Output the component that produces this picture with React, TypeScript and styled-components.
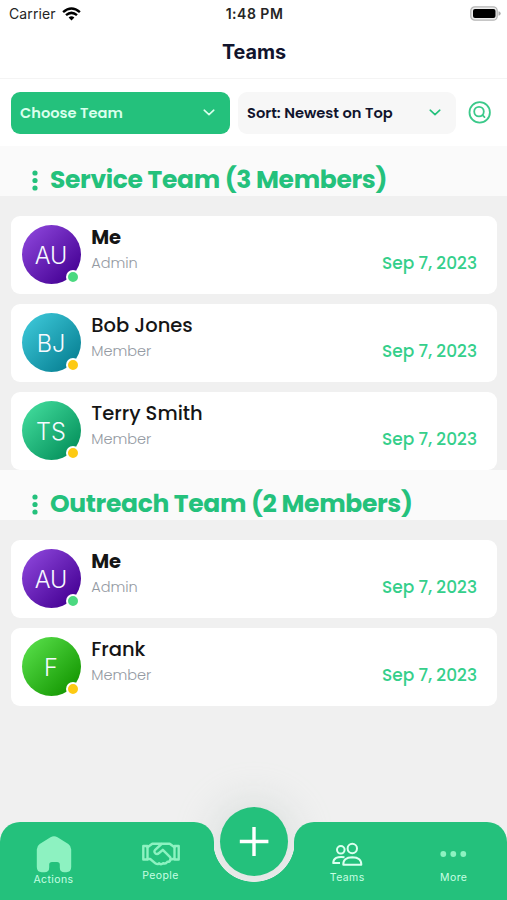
import React from "react";
import styled, { createGlobalStyle } from "styled-components";

const green = "#24c17c";
const mint = "#8df2c1";

const GlobalStyle = createGlobalStyle`
  * { box-sizing: border-box; }
  body { margin: 0; background: #f0f0f0; font-family: Poppins, Inter, sans-serif; }
`;

const Screen = styled.main`
  width: 507px;
  height: 900px;
  display: flex;
  flex-direction: column;
  overflow: hidden;
  background: #f0f0f0;
`;

const StatusBar = styled.div`
  height: 28px;
  flex: none;
  display: grid;
  grid-template-columns: 1fr auto 1fr;
  align-items: center;
  padding: 0 7px 0 9px;
  background: #fff;
  color: #252525;
  font: 400 14px/28px Inter, sans-serif;
`;

const Carrier = styled.div`
  display: flex;
  align-items: center;
  gap: 6px;
  letter-spacing: 0.12px;
`;

const Clock = styled.div`
  font-weight: 600;
  font-size: 14px;
  letter-spacing: 0.5px;
`;

const BatteryIcon = styled.svg`
  justify-self: end;
  margin: -2px -1px 0 0;
`;

const TitleBar = styled.header`
  height: 51px;
  flex: none;
  padding-left: 1px;
  background: #fff;
  border-bottom: 1px solid #f4f4f4;
  text-align: center;
  color: #11142d;
  font: 700 19.8px/49px Inter, sans-serif;
`;

const Filters = styled.div`
  height: 67px;
  flex: none;
  display: flex;
  align-items: flex-start;
  gap: 8px;
  padding: 13px 11px 0;
  background: #fff;
`;

const Select = styled.button<{ $primary?: boolean }>`
  height: 42px;
  width: ${(p) => (p.$primary ? 219 : 218)}px;
  display: flex;
  align-items: center;
  justify-content: space-between;
  border: 0;
  border-radius: 9px;
  padding: 0 14px 0 9px;
  background: ${(p) => (p.$primary ? green : "#f7f7f7")};
  color: ${(p) => (p.$primary ? "#d9ffec" : "#11142d")};
  font: 600 14.65px/42px Poppins, Inter, sans-serif;
  white-space: nowrap;
`;

const SearchButton = styled.button`
  width: 24px;
  height: 24px;
  margin: 8px 0 0 4px;
  padding: 0;
  border: 0;
  background: none;
`;

const TeamHeader = styled.h2`
  height: 50px;
  flex: none;
  display: flex;
  align-items: center;
  gap: 12px;
  margin: 0;
  padding: 18px 0 0 32px;
  background: #fafafa;
  color: ${green};
`;

const TeamName = styled.span`
  font: 700 25px/34px Poppins, Inter, sans-serif;
  letter-spacing: -0.35px;
  white-space: nowrap;
`;

const MemberList = styled.div`
  display: flex;
  flex-direction: column;
  gap: 10px;
  padding: 20px 10px 0 11px;
`;

const Card = styled.article`
  height: 78px;
  display: grid;
  grid-template-columns: 59px 1fr auto;
  column-gap: 10.7px;
  padding: 9px 20px 0 10.5px;
  border-radius: 9px;
  background: #fff;
`;

const Avatar = styled.div<{ $from: string; $to: string }>`
  position: relative;
  width: 59px;
  height: 59px;
  border-radius: 50%;
  background: linear-gradient(135deg, ${(p) => p.$from} 10%, ${(p) => p.$to} 90%);
  color: #f6faff;
  text-align: center;
  font: 300 23.5px/61px Inter, sans-serif;
`;

const Status = styled.span<{ $online: boolean }>`
  position: absolute;
  right: 1px;
  bottom: 0;
  width: 14px;
  height: 14px;
  border: 2px solid #fff;
  border-radius: 50%;
  background: ${(p) => (p.$online ? "#4bd980" : "#fdca13")};
`;

const Person = styled.div`
  display: flex;
  flex-direction: column;
`;

const Name = styled.span<{ $self?: boolean }>`
  padding-top: 1px;
  color: #151515;
  font: ${(p) => (p.$self ? 700 : 500)} 19.5px/24px Poppins, Inter, sans-serif;
`;

const Role = styled.span`
  margin-top: 3px;
  color: #949aa3;
  font: 300 14.5px/20px Poppins, Inter, sans-serif;
`;

const JoinDate = styled.time`
  padding-top: 26px;
  color: #35cf8b;
  font: 500 17px/24px Poppins, Inter, sans-serif;
`;

const Nav = styled.nav`
  position: relative;
  height: 78px;
  flex: none;
  margin-top: auto;
  display: grid;
  grid-template-columns: 214px 80px 213px;
`;

const NavPanel = styled.div`
  display: grid;
  grid-template-columns: 1fr 1fr;
  z-index: 1;
  border-radius: 20px 20px 0 0;
  background: ${green};
`;

const Notch = styled.div`
  z-index: 1;
  margin: 19px -1px 0;
  background: radial-gradient(circle at 50% 0, transparent 40.5px, ${green} 41.2px);
`;

const Halo = styled.div`
  position: absolute;
  left: 220px;
  top: -15px;
  width: 68px;
  height: 68px;
  border-radius: 50%;
  background: #dbe0de;
  box-shadow: 0 0 38px 8px #b4c4bc55;
`;

const AddButton = styled.button`
  position: absolute;
  z-index: 2;
  left: 220px;
  top: -15px;
  width: 68px;
  height: 69px;
  padding: 0;
  border: 0;
  border-radius: 50%;
  background: ${green};
`;

const NavItem = styled.a<{ $active?: boolean; $top: number; $gap: number }>`
  display: flex;
  flex-direction: column;
  align-items: center;
  gap: ${(p) => p.$gap}px;
  padding-top: ${(p) => p.$top}px;
  color: ${(p) => (p.$active ? "#dcffef" : mint)};
`;

const NavLabel = styled.span`
  color: #c7ffe3;
  font: 400 10.5px/12px Inter, sans-serif;
  letter-spacing: 0.4px;
`;

const Chevron = ({ color }: { color: string }) => (
  <svg width="14" height="10" viewBox="0 0 14 10" fill="none" stroke={color} strokeWidth="1.6" strokeLinecap="round" strokeLinejoin="round">
    <path d="M2.2 2.2 7 6.7l4.8-4.5" />
  </svg>
);

const palettes = {
  violet: ["#8a43d8", "#440093"],
  teal: ["#3bc5d6", "#078093"],
  emerald: ["#40d99a", "#04905b"],
  lime: ["#55dc47", "#139600"],
};

interface Member {
  name: string;
  initials: string;
  palette: keyof typeof palettes;
  admin?: boolean;
}

const me: Member = { name: "Me", initials: "AU", palette: "violet", admin: true };

const teams: { name: string; members: Member[] }[] = [
  {
    name: "Service Team (3 Members)",
    members: [
      me,
      { name: "Bob Jones", initials: "BJ", palette: "teal" },
      { name: "Terry Smith", initials: "TS", palette: "emerald" },
    ],
  },
  {
    name: "Outreach Team (2 Members)",
    members: [me, { name: "Frank", initials: "F", palette: "lime" }],
  },
];

export default function App() {
  return (
    <>
      <GlobalStyle />
      <Screen>
        <StatusBar>
          <Carrier>
            Carrier
            <svg width="19" height="14" viewBox="0 0 19 14" fill="none" stroke="#000" strokeWidth="2.5">
              <path d="M1.1 5.1Q9.5-2 17.9 5.1M4 8.1q5.5-4.5 11 0" />
              <path d="m9.5 13.4-2.9-3q2.9-2.2 5.8 0Z" fill="#000" stroke="none" />
            </svg>
          </Carrier>
          <Clock>1:48 PM</Clock>
          <BatteryIcon width="31" height="15" viewBox="0 0 31 15">
            <rect x=".8" y=".8" width="26.4" height="13.4" rx="4" fill="#eee" stroke="#b5b5b5" strokeWidth="1.3" />
            <rect x="3" y="3" width="22.5" height="9" rx="2" />
            <path d="M28.5 5.3q2.2.5 2.2 2.2t-2.2 2.2Z" fill="#aaa" />
          </BatteryIcon>
        </StatusBar>
        <TitleBar>Teams</TitleBar>
        <Filters>
          <Select $primary>Choose Team<Chevron color="#d9ffec" /></Select>
          <Select>Sort: Newest on Top<Chevron color={green} /></Select>
          <SearchButton aria-label="Search">
            <svg width="24" height="24" viewBox="0 0 24 24" fill="none" stroke="#3bc98a" strokeWidth="1.8" strokeLinecap="round">
              <circle cx="11.7" cy="12.4" r="10.2" />
              <circle cx="11" cy="11.6" r="4.8" />
              <path d="m14.5 15.1 2 2" />
            </svg>
          </SearchButton>
        </Filters>
        {teams.map((team) => (
          <React.Fragment key={team.name}>
            <TeamHeader>
              <svg width="6" height="21" viewBox="0 0 6 21" fill={green}>
                <circle cx="3" cy="3" r="2.6" />
                <circle cx="3" cy="10.5" r="2.6" />
                <circle cx="3" cy="18" r="2.6" />
              </svg>
              <TeamName>{team.name}</TeamName>
            </TeamHeader>
            <MemberList>
              {team.members.map((m) => (
                <Card key={m.name}>
                  <Avatar $from={palettes[m.palette][0]} $to={palettes[m.palette][1]}>
                    {m.initials}
                    <Status $online={!!m.admin} />
                  </Avatar>
                  <Person>
                    <Name $self={m.admin}>{m.name}</Name>
                    <Role>{m.admin ? "Admin" : "Member"}</Role>
                  </Person>
                  <JoinDate>Sep 7, 2023</JoinDate>
                </Card>
              ))}
            </MemberList>
          </React.Fragment>
        ))}
        <Nav>
          <Halo />
          <NavPanel>
            <NavItem $top={14} $gap={1}>
              <svg width="36" height="37" viewBox="0 0 36 37" fill="currentColor">
                <path d="M14.5 1.3q3.5-2 7 0l10.8 6.7Q35.2 10 35.2 13.5V31q0 5.2-5 5.2h-1.7q-4.7 0-4.700-4.700v-2.700q0-2.800-2.800-2.800h-5q-2.800 0-2.800 2.800v2.700q0 4.700-4.700 4.700H5.800q-5 0-5-5.200V13.500Q.8 10 3.700 8Z" />
              </svg>
              <NavLabel>Actions</NavLabel>
            </NavItem>
            <NavItem $top={19} $gap={4}>
              <svg width="38" height="25" viewBox="0 0 38 25" fill="none" stroke="currentColor" strokeWidth="2.4" strokeLinejoin="round" strokeLinecap="round">
                <path d="M1.3 5h4.2v13.5H1.3ZM36.700 5h-4.200v13.500h4.200Z" />
                <path d="M5.500 6.300 10.300 2.700h17.400l4.800 3.600M5.500 18h2.700l5.500 4.600q1.800 1.200 3.300-.3 2.200 1.800 4.200-.2 2.500 1.200 4.100-1.300 2.300.4 3.200-2.300l4-.7" />
                <path d="m19.500 3-6.300 5.800q-1.700 2.100.2 3.600 1.800 1.200 3.700-.4l3.700-3.200 7.300 7.300q1.100 1.300.2 2.500" />
              </svg>
              <NavLabel>People</NavLabel>
            </NavItem>
          </NavPanel>
          <Notch />
          <NavPanel>
            <NavItem $active $top={20} $gap={6}>
              <svg width="31" height="24" viewBox="0 0 31 24" fill="none" stroke="currentColor" strokeWidth="2" strokeLinejoin="round">
                <circle cx="20.3" cy="6.5" r="4.7" />
                <circle cx="8.8" cy="7.8" r="3.8" />
                <path d="M11.3 22.8q-.4-7.3 9-7.5 9.3.2 9 7.5Z" />
                <path d="M12.5 15.2Q1.5 13.8 1.2 21h6.8" />
              </svg>
              <NavLabel>Teams</NavLabel>
            </NavItem>
            <NavItem $top={29} $gap={15}>
              <svg width="28" height="6" viewBox="0 0 28 6" fill="currentColor">
                <circle cx="3.3" cy="3" r="2.9" />
                <circle cx="13.3" cy="3" r="2.9" />
                <circle cx="23.3" cy="3" r="2.9" />
              </svg>
              <NavLabel>More</NavLabel>
            </NavItem>
          </NavPanel>
          <AddButton aria-label="Add">
            <svg width="68" height="69" viewBox="0 0 68 69" stroke="#fff" strokeWidth="3.4">
              <path d="M19.8 34.5h28.6M34 20v29" />
            </svg>
          </AddButton>
        </Nav>
      </Screen>
    </>
  );
}
